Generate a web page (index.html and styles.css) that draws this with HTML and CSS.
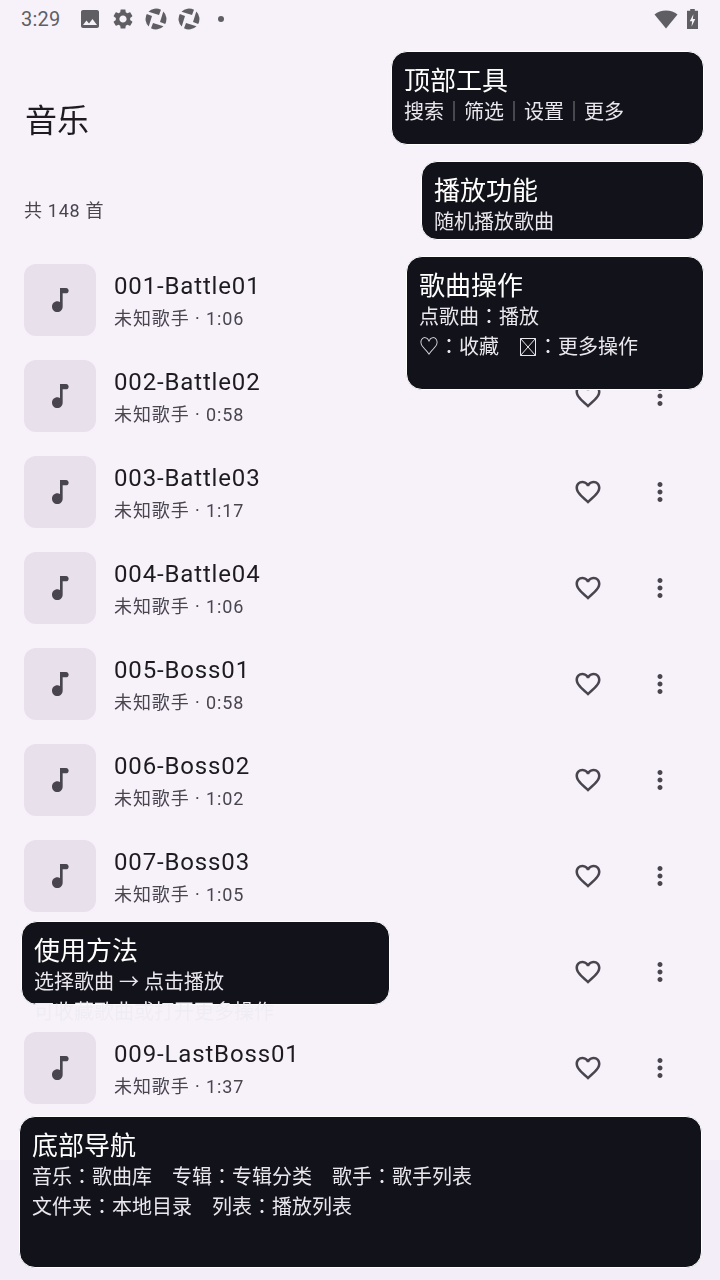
FILE: index.html
```html
<!DOCTYPE html>
<html lang="zh-CN">
<head>
    <meta charset="UTF-8">
    <meta name="viewport" content="width=device-width, initial-scale=1.0">
    <title>音乐</title>
    <link rel="stylesheet" href="styles.css">
</head>
<body>
    <svg class="sprites" width="0" height="0">
        <defs>
            <symbol id="note" viewBox="0 0 24 24"><path d="M12 3v10.55c-.59-.34-1.27-.55-2-.55-2.21 0-4 1.79-4 4s1.790 4 4 4 4-1.790 4-4V7h2.500c1.100 0 2-.9 2-2s-.9-2-2-2H12z"/></symbol>
            <symbol id="heart" viewBox="0 0 24 24"><path d="M16.500 3c-1.740 0-3.410.81-4.500 2.090C10.910 3.810 9.240 3 7.500 3 4.420 3 2 5.420 2 8.500c0 3.780 3.400 6.860 8.550 11.540L12 21.350l1.450-1.320C18.600 15.360 22 12.280 22 8.500 22 5.420 19.580 3 16.500 3zm-4.400 15.550l-.1.1-.1-.1C7.140 14.240 4 11.390 4 8.500 4 6.500 5.500 5 7.500 5c1.540 0 3.040.99 3.570 2.360h1.870C13.460 5.990 14.960 5 16.500 5c2 0 3.500 1.500 3.500 3.500 0 2.890-3.140 5.740-7.900 10.050z"/></symbol>
            <symbol id="dots" viewBox="0 0 24 24"><path d="M12 8c1.100 0 2-.9 2-2s-.9-2-2-2-2 .9-2 2 .9 2 2 2zm0 2c-1.100 0-2 .9-2 2s.9 2 2 2 2-.9 2-2-.9-2-2-2zm0 6c-1.100 0-2 .9-2 2s.9 2 2 2 2-.9 2-2-.9-2-2-2z"/></symbol>
            <symbol id="aperture" viewBox="0 0 24 24">
                <path id="blade" d="M4.500 4.700A10.500 10.500 0 0 1 17 2.800L15 8z"/>
                <use href="#blade" transform="rotate(90 12 12)"/>
                <use href="#blade" transform="rotate(180 12 12)"/>
                <use href="#blade" transform="rotate(270 12 12)"/>
            </symbol>
        </defs>
    </svg>

    <div class="status-bar">
        <div class="status-left">
            <span class="status-time">3:29</span>
            <svg class="status-icon" viewBox="0 0 24 24"><path fill-rule="evenodd" d="M21 19V5c0-1.100-.9-2-2-2H5c-1.100 0-2 .9-2 2v14c0 1.100.9 2 2 2h14c1.100 0 2-.9 2-2zM8.500 13.500l2.500 3 3.500-4.500 4.500 6H5l3.500-4.500z"/></svg>
            <svg class="status-icon" viewBox="0 0 24 24"><path d="M19.140 12.940c.04-.3.060-.61.060-.94 0-.32-.02-.64-.07-.94l2.030-1.580c.18-.14.23-.41.120-.61l-1.920-3.320c-.12-.22-.37-.29-.59-.22l-2.390.96c-.5-.38-1.030-.7-1.620-.94l-.36-2.540c-.04-.24-.24-.41-.48-.41h-3.840c-.24 0-.43.170-.47.410l-.36 2.540c-.59.240-1.130.570-1.620.94l-2.390-.96c-.22-.08-.47 0-.59.220L2.740 8.870c-.12.210-.08.470.12.610l2.030 1.580c-.05.3-.09.630-.09.940s.02.640.07.940l-2.030 1.580c-.18.140-.23.410-.12.610l1.920 3.320c.12.220.37.290.59.220l2.390-.96c.5.380 1.030.7 1.620.94l.36 2.540c.05.240.24.410.48.410h3.840c.24 0 .44-.17.470-.41l.36-2.540c.59-.24 1.130-.56 1.620-.94l2.390.96c.22.080.47 0 .59-.22l1.920-3.320c.12-.22.070-.47-.12-.61l-2.010-1.580zM12 15.600c-1.980 0-3.600-1.620-3.600-3.600s1.620-3.600 3.600-3.600 3.600 1.620 3.600 3.600-1.620 3.600-3.600 3.600z"/></svg>
            <svg class="status-icon"><use href="#aperture"/></svg>
            <svg class="status-icon"><use href="#aperture"/></svg>
            <span class="status-dot"></span>
        </div>
        <div class="status-right">
            <svg class="wifi-icon" viewBox="0 0 24 24"><path d="M12 21.500L.5 7.500C3.600 4.900 7.600 3.500 12 3.500s8.400 1.400 11.500 4z"/></svg>
            <svg class="battery-icon" viewBox="1 1 12 23" preserveAspectRatio="none"><path d="M4.500 1h5v2H13v21H1V3h3.500zM8 7l-4 8h2.600L6 21l4-8.500H7.400z" fill-rule="evenodd"/></svg>
        </div>
    </div>

    <header class="page-header">
        <h1 class="page-title">音乐</h1>
    </header>
    <div class="song-count">共 148 首</div>

    <ul class="song-list">
        <li class="song-row">
            <div class="cover"><svg><use href="#note"/></svg></div>
            <div class="song-info"><div class="song-name">001-Battle01</div><div class="song-meta">未知歌手 · 1:06</div></div>
            <svg class="row-icon heart"><use href="#heart"/></svg>
            <svg class="row-icon dots"><use href="#dots"/></svg>
        </li>
        <li class="song-row">
            <div class="cover"><svg><use href="#note"/></svg></div>
            <div class="song-info"><div class="song-name">002-Battle02</div><div class="song-meta">未知歌手 · 0:58</div></div>
            <svg class="row-icon heart"><use href="#heart"/></svg>
            <svg class="row-icon dots"><use href="#dots"/></svg>
        </li>
        <li class="song-row">
            <div class="cover"><svg><use href="#note"/></svg></div>
            <div class="song-info"><div class="song-name">003-Battle03</div><div class="song-meta">未知歌手 · 1:17</div></div>
            <svg class="row-icon heart"><use href="#heart"/></svg>
            <svg class="row-icon dots"><use href="#dots"/></svg>
        </li>
        <li class="song-row">
            <div class="cover"><svg><use href="#note"/></svg></div>
            <div class="song-info"><div class="song-name">004-Battle04</div><div class="song-meta">未知歌手 · 1:06</div></div>
            <svg class="row-icon heart"><use href="#heart"/></svg>
            <svg class="row-icon dots"><use href="#dots"/></svg>
        </li>
        <li class="song-row">
            <div class="cover"><svg><use href="#note"/></svg></div>
            <div class="song-info"><div class="song-name">005-Boss01</div><div class="song-meta">未知歌手 · 0:58</div></div>
            <svg class="row-icon heart"><use href="#heart"/></svg>
            <svg class="row-icon dots"><use href="#dots"/></svg>
        </li>
        <li class="song-row">
            <div class="cover"><svg><use href="#note"/></svg></div>
            <div class="song-info"><div class="song-name">006-Boss02</div><div class="song-meta">未知歌手 · 1:02</div></div>
            <svg class="row-icon heart"><use href="#heart"/></svg>
            <svg class="row-icon dots"><use href="#dots"/></svg>
        </li>
        <li class="song-row">
            <div class="cover"><svg><use href="#note"/></svg></div>
            <div class="song-info"><div class="song-name">007-Boss03</div><div class="song-meta">未知歌手 · 1:05</div></div>
            <svg class="row-icon heart"><use href="#heart"/></svg>
            <svg class="row-icon dots"><use href="#dots"/></svg>
        </li>
        <li class="song-row">
            <div class="cover cover-covered"></div>
            <div class="song-info"></div>
            <svg class="row-icon heart"><use href="#heart"/></svg>
            <svg class="row-icon dots"><use href="#dots"/></svg>
        </li>
        <li class="song-row">
            <div class="cover"><svg><use href="#note"/></svg></div>
            <div class="song-info"><div class="song-name">009-LastBoss01</div><div class="song-meta">未知歌手 · 1:37</div></div>
            <svg class="row-icon heart"><use href="#heart"/></svg>
            <svg class="row-icon dots"><use href="#dots"/></svg>
        </li>
    </ul>

    <div class="bottom-bar"></div>

    <!-- guide bubbles -->
    <div class="tip tip-top">
        <div class="tip-title">顶部工具</div>
        <div class="tip-line">搜索<span class="pipe">｜</span>筛选<span class="pipe">｜</span>设置<span class="pipe">｜</span>更多</div>
    </div>
    <div class="tip tip-play">
        <div class="tip-title">播放功能</div>
        <div class="tip-line">随机播放歌曲</div>
    </div>
    <div class="tip tip-song">
        <div class="tip-title">歌曲操作</div>
        <div class="tip-line">点歌曲<span class="colon" lang="zh-TW">：</span>播放</div>
        <div class="tip-line">♡<span class="colon" lang="zh-TW">：</span>收藏　<svg class="tofu" viewBox="0 0 16 18"><path d="M.5.5h15v17H.5zM.5.5l15 17M15.500.5l-15 17"/></svg><span class="colon" lang="zh-TW">：</span>更多操作</div>
    </div>
    <div class="tip tip-usage">
        <div class="tip-title">使用方法</div>
        <div class="tip-line">选择歌曲 → 点击播放</div>
        <div class="tip-line tip-line-over">可收藏歌曲或打开更多操作</div>
    </div>
    <div class="tip tip-nav">
        <div class="tip-title">底部导航</div>
        <div class="tip-line">音乐<span class="colon" lang="zh-TW">：</span>歌曲库　专辑<span class="colon" lang="zh-TW">：</span>专辑分类　歌手<span class="colon" lang="zh-TW">：</span>歌手列表</div>
        <div class="tip-line">文件夹<span class="colon" lang="zh-TW">：</span>本地目录　列表<span class="colon" lang="zh-TW">：</span>播放列表</div>
    </div>
</body>
</html>
```
FILE: styles.css
```css
* {
    box-sizing: border-box;
}

body {
    width: 720px;
    height: 1280px;
    margin: 0;
    position: relative;
    overflow: hidden;
    background-color: #f7f2fa;
    color: #1d1b20;
    font-family: Roboto, "Noto Sans CJK SC", sans-serif;
}

.sprites {
    position: absolute;
}

/* Status bar */
.status-bar {
    height: 37px;
    padding: 0 22px 0 21px;
    display: flex;
    justify-content: space-between;
    align-items: center;
    color: #5f5f63;
    fill: #5f5f63;
}

.status-left {
    display: flex;
    align-items: center;
}

.status-time {
    font-size: 20px;
    letter-spacing: 0.2px;
    margin-right: 8px;
}

.status-icon {
    width: 24px;
    height: 24px;
    margin-left: 9.2px;
}

.status-dot {
    width: 6px;
    height: 6px;
    margin-left: 17px;
    border-radius: 50%;
    background-color: #5f5f63;
}

.status-right {
    display: flex;
    align-items: center;
    gap: 9px;
}

.wifi-icon {
    width: 24px;
    height: 24px;
}

.battery-icon {
    width: 11px;
    height: 20px;
}

/* Header */
.page-header {
    height: 159px;
    padding: 61px 25px 0;
}

.page-title {
    margin: 0;
    font-size: 32px;
    line-height: 46px;
    font-weight: 400;
    will-change: transform;
}

.song-count {
    height: 56px;
    padding: 1px 24px 0;
    font-size: 18px;
    line-height: 28px;
    letter-spacing: 0.7px;
    color: #49454f;
    will-change: transform;
}

/* List */
.song-list {
    list-style: none;
    margin: 0;
    padding: 0;
    will-change: transform;
}

.song-row {
    height: 96px;
    padding: 0 45px 0 24px;
    display: flex;
    align-items: center;
}

.cover {
    width: 72px;
    height: 72px;
    flex-shrink: 0;
    border-radius: 12px;
    background-color: #e8e0eb;
    display: flex;
    align-items: center;
    justify-content: center;
    fill: #49454f;
}

.cover svg {
    width: 32px;
    height: 32px;
}

.cover-covered {
    background-color: transparent;
}

.song-info {
    flex: 1;
    margin-left: 18px;
    padding-top: 1px;
}

.song-name {
    font-size: 24px;
    line-height: 30px;
    letter-spacing: 0.85px;
}

.song-meta {
    font-size: 18px;
    line-height: 24px;
    margin-top: 6px;
    letter-spacing: 0.9px;
    color: #49454f;
}

.row-icon {
    width: 30px;
    height: 30px;
    fill: #49454f;
}

.heart {
    margin-right: 42px;
}

.bottom-bar {
    position: absolute;
    left: 0;
    right: 0;
    bottom: 0;
    height: 120px;
    background-color: #f3edf7;
}

/* Guide bubbles */
.tip {
    position: absolute;
    padding: 12px 12px 0;
    background-color: #12131a;
    border: 1px solid #fff;
    border-radius: 16px;
    color: #fff;
    will-change: transform;
}

.tip-title {
    font-size: 26px;
    line-height: 34px;
    margin-bottom: -1px;
}

.tip-line {
    font-size: 20px;
    line-height: 30px;
    white-space: nowrap;
    color: #ebe7ee;
}

/* runs past the bottom of the bubble */
.tip-line-over {
    color: #f0ecf4;
}

.pipe {
    color: #8e8e90;
}

.colon {
    font-family: "Noto Sans CJK TC", sans-serif;
    line-height: 1;
}

.tofu {
    width: 16px;
    height: 18px;
    margin: 0 2px 0 1px;
    vertical-align: -2px;
    fill: none;
    stroke: #ebe7ee;
    stroke-width: 1;
}

.tip-top {
    left: 391px;
    top: 51px;
    width: 313px;
    height: 94px;
}

.tip-play {
    left: 421px;
    top: 161px;
    width: 283px;
    height: 79px;
}

.tip-song {
    left: 406px;
    top: 256px;
    width: 298px;
    height: 134px;
}

.tip-usage {
    left: 21px;
    top: 921px;
    width: 369px;
    height: 84px;
}

.tip-nav {
    left: 19px;
    top: 1116px;
    width: 683px;
    height: 152px;
}
```
